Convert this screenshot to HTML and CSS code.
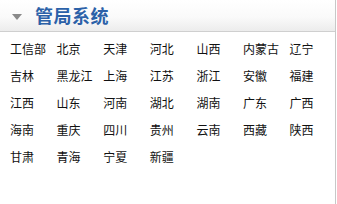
FILE: index.html
```html
<!DOCTYPE html>
<html lang="zh">
<head>
<meta charset="utf-8">
<link rel="stylesheet" href="styles.css">
</head>
<body>
<div class="panel">
  <div class="panel-head">
    <span class="arrow"></span>
    <h2 class="title">管局系统</h2>
  </div>
  <ul class="list">
    <li>工信部</li><li>北京</li><li>天津</li><li>河北</li><li>山西</li><li>内蒙古</li><li>辽宁</li>
    <li>吉林</li><li>黑龙江</li><li>上海</li><li>江苏</li><li>浙江</li><li>安徽</li><li>福建</li>
    <li>江西</li><li>山东</li><li>河南</li><li>湖北</li><li>湖南</li><li>广东</li><li>广西</li>
    <li>海南</li><li>重庆</li><li>四川</li><li>贵州</li><li>云南</li><li>西藏</li><li>陕西</li>
    <li>甘肃</li><li>青海</li><li>宁夏</li><li>新疆</li>
  </ul>
</div>
</body>
</html>
```

FILE: styles.css
```css
html, body {
  margin: 0;
  padding: 0;
  background: #fff;
}
.panel {
  width: 335px;
  height: 204px;
  border-right: 1px solid #c8c8c8;
  font-family: "Noto Sans CJK SC", "Microsoft YaHei", sans-serif;
}
.panel-head {
  height: 31px;
  border-bottom: 1px solid #cfcfcf;
  background: linear-gradient(#ffffff 0%, #fafafa 55%, #ececec 100%);
  display: flex;
  align-items: center;
}
.arrow {
  width: 0;
  height: 0;
  margin-left: 12px;
  margin-top: 3px;
  border-left: 5px solid transparent;
  border-right: 5px solid transparent;
  border-top: 6px solid #8a8a8a;
}
.title {
  margin: 0 0 0 13px;
  font-size: 18px;
  font-weight: bold;
  color: #2b61a8;
  letter-spacing: 0.5px;
  line-height: 31px;
}
.list {
  list-style: none;
  margin: 0;
  padding: 3px 0 0 10px;
  display: grid;
  grid-template-columns: repeat(7, 46.6px);
  grid-auto-rows: 27px;
}
.list li {
  font-size: 12px;
  line-height: 27px;
  color: #111;
  white-space: nowrap;
}
```
